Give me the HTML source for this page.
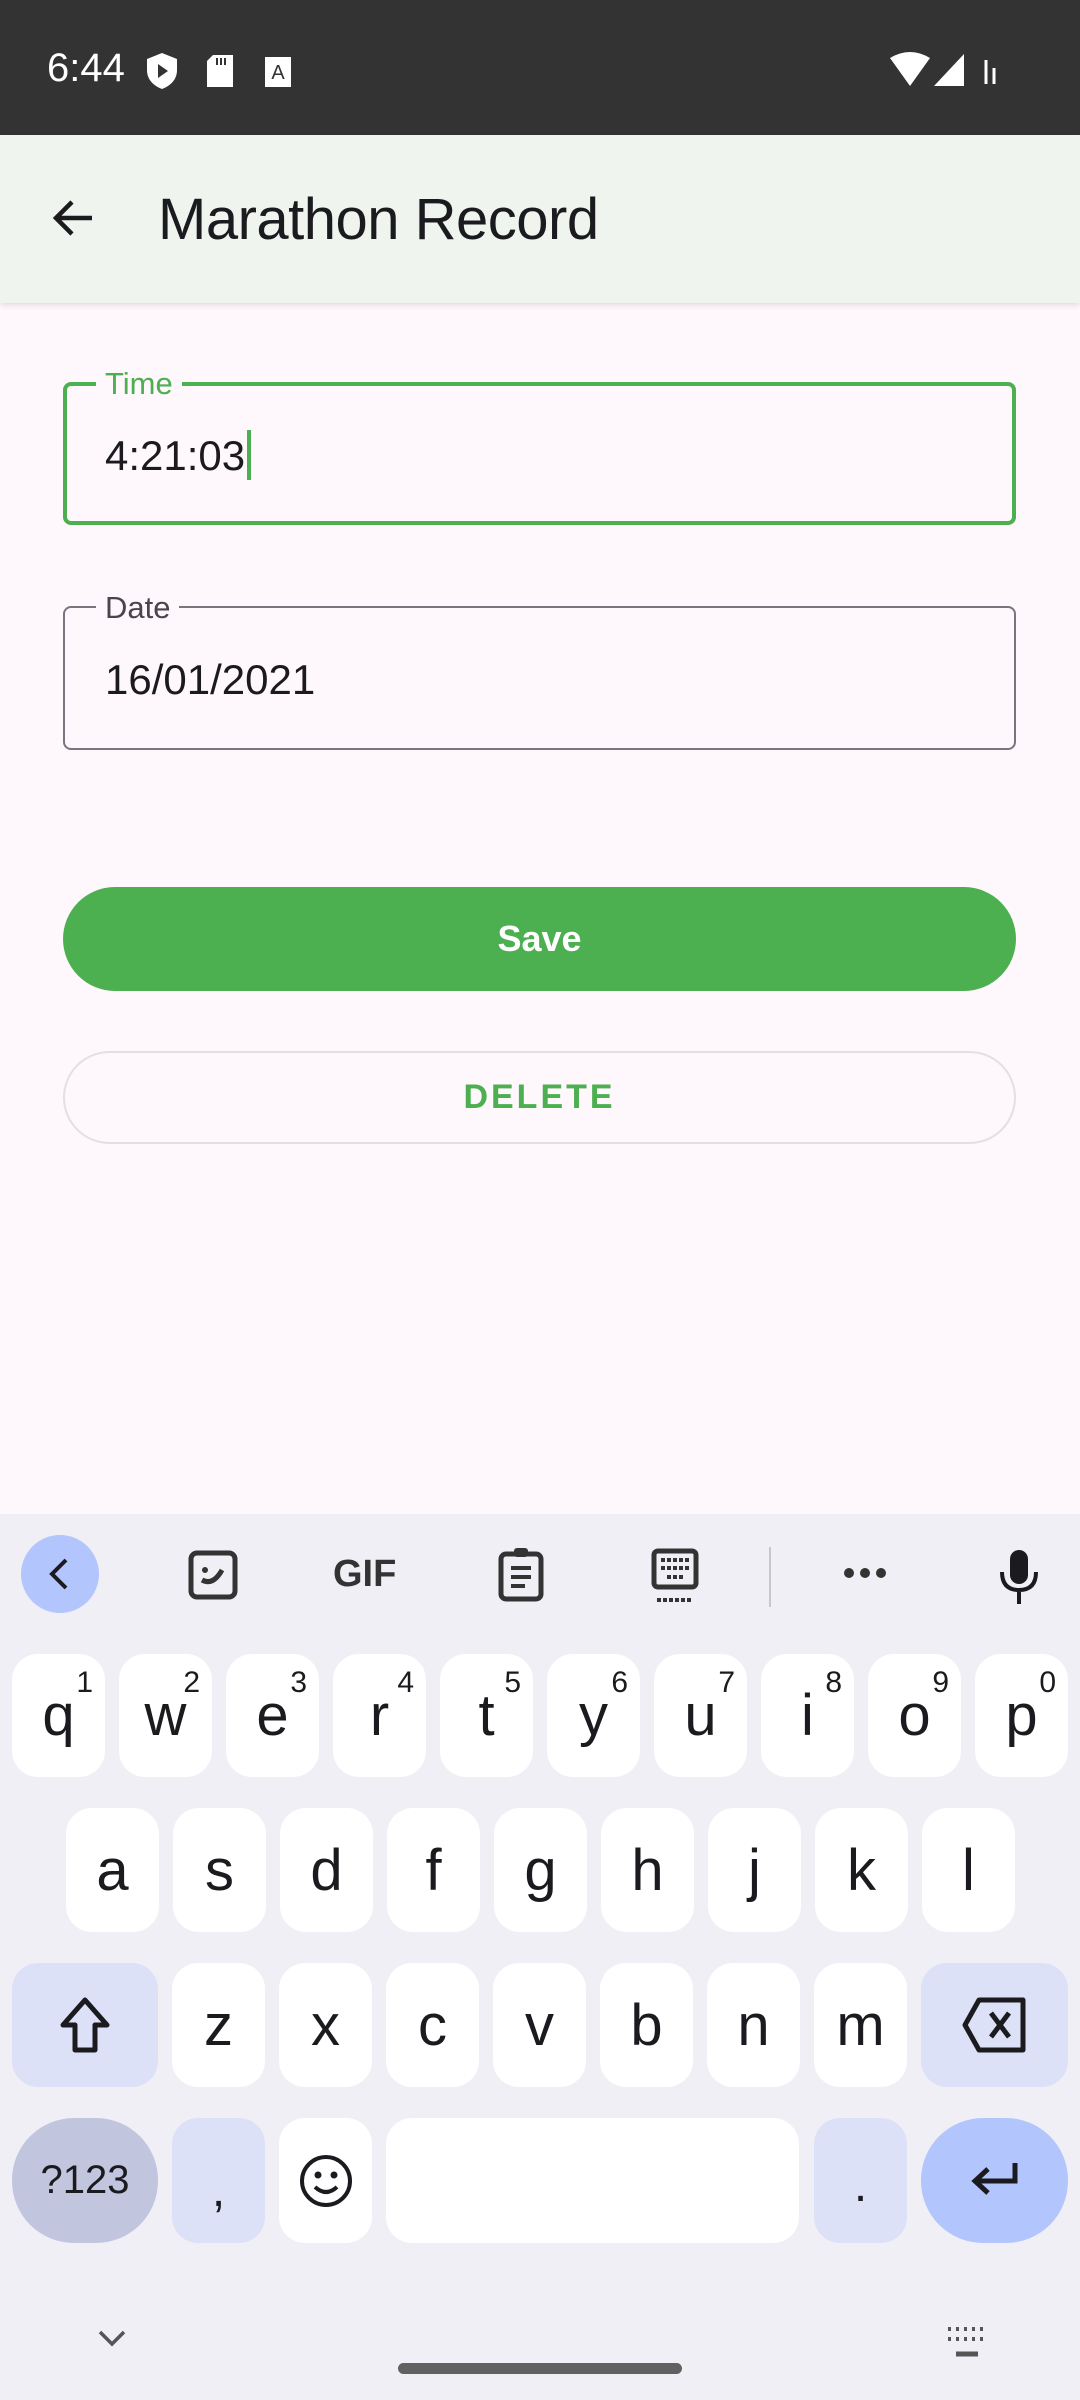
<!DOCTYPE html>
<html><head><meta charset="utf-8"><style>
*{margin:0;padding:0;box-sizing:border-box}
body{width:1080px;height:2400px;position:relative;overflow:hidden;background:#fef7fb;font-family:"Liberation Sans",sans-serif}
.a{position:absolute}
.k{position:absolute;background:#fff;border-radius:26px;display:flex;align-items:center;justify-content:center;font-size:58px;color:#1b1b1f}
.k sup{position:absolute;top:12px;right:12px;font-size:30px;color:#1b1b1f}
.s{background:#dde1f7}
</style></head><body>
<div class="a" style="left:0;top:0;width:1080px;height:135px;background:#333"></div>
<div class="a" style="left:47px;top:46px;color:#fff;font-size:40px">6:44</div>
<svg class="a" style="left:145px;top:52px" width="34" height="38" viewBox="0 0 34 38"><path d="M17 1 L32 7 V18 C32 28 25 34 17 37 C9 34 2 28 2 18 V7Z" fill="#fff"/><path d="M13 12 L23 19 L13 26Z" fill="#333"/></svg>
<svg class="a" style="left:207px;top:55px" width="26" height="32"><path d="M6 0H26V32H0V6Z" fill="#fff"/><path d="M10 3v7M14 3v7M18 3v7" stroke="#333" stroke-width="2"/></svg>
<svg class="a" style="left:265px;top:57px" width="26" height="30"><rect width="26" height="30" fill="#fff"/><text x="13" y="22" font-size="20" text-anchor="middle" fill="#333" font-family="Liberation Sans">A</text></svg>
<svg class="a" style="left:890px;top:52px" width="110" height="36"><path d="M0 6 Q20 -6 40 6 L20 34Z" fill="#fff"/><path d="M44 34 L74 2 V34Z" fill="#fff"/><path d="M96 8v24M104 16v16" stroke="#fff" stroke-width="3"/></svg>
<div class="a" style="left:0;top:135px;width:1080px;height:168px;background:#eff5ee;box-shadow:0 2px 6px rgba(0,0,0,.12)"></div>
<svg class="a" style="left:50px;top:194px" width="48" height="48" viewBox="0 0 48 48"><path d="M42 24H8M22 8L6 24L22 40" stroke="#1b1b1f" stroke-width="4.5" fill="none"/></svg>
<div class="a" style="left:158px;top:186px;font-size:58px;color:#1b1b1f;letter-spacing:-0.5px">Marathon Record</div>
<div class="a" style="left:63px;top:382px;width:953px;height:143px;border:4px solid #4caf50;border-radius:8px"></div>
<div class="a" style="left:96px;top:366px;padding:0 9px;background:#fef7fb;color:#4caf50;font-size:31px">Time</div>
<div class="a" style="left:105px;top:430px;font-size:42px;color:#1b1b1f">4:21:03<span style="display:inline-block;width:4px;height:50px;background:#4caf50;vertical-align:-10px;margin-left:2px"></span></div>
<div class="a" style="left:63px;top:606px;width:953px;height:144px;border:2px solid #79747e;border-radius:8px"></div>
<div class="a" style="left:96px;top:590px;padding:0 9px;background:#fef7fb;color:#49454f;font-size:31px">Date</div>
<div class="a" style="left:105px;top:656px;font-size:42px;color:#1b1b1f">16/01/2021</div>
<div class="a" style="left:63px;top:887px;width:953px;height:104px;background:#4caf50;border-radius:52px;color:#fff;font-size:36px;font-weight:bold;display:flex;align-items:center;justify-content:center">Save</div>
<div class="a" style="left:63px;top:1051px;width:953px;height:93px;border:2px solid #e3dfe4;border-radius:47px;color:#4caf50;font-size:34px;font-weight:bold;letter-spacing:3px;display:flex;align-items:center;justify-content:center">DELETE</div>
<div class="a" style="left:0;top:1514px;width:1080px;height:886px;background:#f0eff6"></div>
<div class="a" style="left:21px;top:1535px;width:78px;height:78px;border-radius:50%;background:#b3c5fd"></div>
<svg class="a" style="left:44px;top:1556px" width="30" height="36"><path d="M22 4L8 18L22 32" stroke="#1b1b1f" stroke-width="4" fill="none"/></svg>
<svg class="a" style="left:188px;top:1550px" width="50" height="50"><rect x="3" y="3" width="44" height="44" rx="6" stroke="#333" stroke-width="5" fill="none"/><circle cx="17" cy="20" r="3" fill="#333"/><path d="M14 30Q25 36 34 20" stroke="#333" stroke-width="5" fill="none"/></svg>
<div class="a" style="left:333px;top:1553px;font-size:38px;font-weight:bold;color:#333">GIF</div>
<svg class="a" style="left:498px;top:1546px" width="46" height="56"><rect x="3" y="8" width="40" height="45" rx="5" stroke="#333" stroke-width="5" fill="none"/><path d="M13 22h20M13 31h20M13 40h14" stroke="#333" stroke-width="4"/><rect x="16" y="2" width="14" height="9" rx="3" fill="#333"/></svg>
<svg class="a" style="left:651px;top:1548px" width="48" height="56"><rect x="3" y="3" width="42" height="36" rx="4" stroke="#333" stroke-width="5" fill="none"/><path d="M10 12h28M10 20h28M16 29h16M6 52h36" stroke="#333" stroke-width="4" stroke-dasharray="4 2"/></svg>
<div class="a" style="left:769px;top:1547px;width:2px;height:60px;background:#c8c8cc"></div>
<svg class="a" style="left:843px;top:1563px" width="44" height="20"><circle cx="6" cy="10" r="5" fill="#333"/><circle cx="22" cy="10" r="5" fill="#333"/><circle cx="38" cy="10" r="5" fill="#333"/></svg>
<svg class="a" style="left:998px;top:1548px" width="42" height="56"><rect x="12" y="2" width="18" height="34" rx="9" fill="#1b1b1f"/><path d="M4 24Q4 42 21 42Q38 42 38 24M21 42V56" stroke="#1b1b1f" stroke-width="4" fill="none"/></svg>
<div class="k" style="left:12px;top:1654px;width:93px;height:123px">q<sup>1</sup></div>
<div class="k" style="left:119px;top:1654px;width:93px;height:123px">w<sup>2</sup></div>
<div class="k" style="left:226px;top:1654px;width:93px;height:123px">e<sup>3</sup></div>
<div class="k" style="left:333px;top:1654px;width:93px;height:123px">r<sup>4</sup></div>
<div class="k" style="left:440px;top:1654px;width:93px;height:123px">t<sup>5</sup></div>
<div class="k" style="left:547px;top:1654px;width:93px;height:123px">y<sup>6</sup></div>
<div class="k" style="left:654px;top:1654px;width:93px;height:123px">u<sup>7</sup></div>
<div class="k" style="left:761px;top:1654px;width:93px;height:123px">i<sup>8</sup></div>
<div class="k" style="left:868px;top:1654px;width:93px;height:123px">o<sup>9</sup></div>
<div class="k" style="left:975px;top:1654px;width:93px;height:123px">p<sup>0</sup></div>
<div class="k" style="left:66px;top:1808px;width:93px;height:124px">a</div>
<div class="k" style="left:173px;top:1808px;width:93px;height:124px">s</div>
<div class="k" style="left:280px;top:1808px;width:93px;height:124px">d</div>
<div class="k" style="left:387px;top:1808px;width:93px;height:124px">f</div>
<div class="k" style="left:494px;top:1808px;width:93px;height:124px">g</div>
<div class="k" style="left:601px;top:1808px;width:93px;height:124px">h</div>
<div class="k" style="left:708px;top:1808px;width:93px;height:124px">j</div>
<div class="k" style="left:815px;top:1808px;width:93px;height:124px">k</div>
<div class="k" style="left:922px;top:1808px;width:93px;height:124px">l</div>
<div class="k s" style="left:12px;top:1963px;width:146px;height:124px"><svg width="60" height="60" viewBox="0 0 60 60"><path d="M30 5L8 30H20V55H40V30H52Z" stroke="#1b1b1f" stroke-width="5" fill="none" stroke-linejoin="round"/></svg></div>
<div class="k" style="left:172px;top:1963px;width:93px;height:124px">z</div>
<div class="k" style="left:279px;top:1963px;width:93px;height:124px">x</div>
<div class="k" style="left:386px;top:1963px;width:93px;height:124px">c</div>
<div class="k" style="left:493px;top:1963px;width:93px;height:124px">v</div>
<div class="k" style="left:600px;top:1963px;width:93px;height:124px">b</div>
<div class="k" style="left:707px;top:1963px;width:93px;height:124px">n</div>
<div class="k" style="left:814px;top:1963px;width:93px;height:124px">m</div>
<div class="k s" style="left:921px;top:1963px;width:147px;height:124px"><svg width="68" height="56" viewBox="0 0 68 56"><path d="M18 3H62V53H18L4 28Z" stroke="#1b1b1f" stroke-width="5" fill="none" stroke-linejoin="round"/><path d="M30 16L48 40M48 16L30 40" stroke="#1b1b1f" stroke-width="5"/></svg></div>
<div class="k" style="left:12px;top:2118px;width:146px;height:125px;border-radius:62px;background:#c1c6de;font-size:40px">?123</div>
<div class="k s" style="left:172px;top:2118px;width:93px;height:125px;font-size:48px;padding-top:20px">,</div>
<div class="k" style="left:279px;top:2118px;width:93px;height:125px"><svg width="54" height="54"><circle cx="27" cy="27" r="24" stroke="#1b1b1f" stroke-width="4" fill="none"/><circle cx="19" cy="21" r="3.5" fill="#1b1b1f"/><circle cx="35" cy="21" r="3.5" fill="#1b1b1f"/><path d="M16 33Q27 43 38 33" stroke="#1b1b1f" stroke-width="4" fill="none"/></svg></div>
<div class="k" style="left:386px;top:2118px;width:413px;height:125px"></div>
<div class="k s" style="left:814px;top:2118px;width:93px;height:125px;font-size:48px;padding-top:10px">.</div>
<div class="k" style="left:921px;top:2118px;width:147px;height:125px;border-radius:62px;background:#b3c5fd"><svg width="50" height="40"><path d="M45 2V20H6M18 8L5 20L18 32" stroke="#1b1b1f" stroke-width="5" fill="none"/></svg></div>
<svg class="a" style="left:98px;top:2330px" width="28" height="18"><path d="M2 2L14 14L26 2" stroke="#555" stroke-width="3.5" fill="none"/></svg>
<svg class="a" style="left:946px;top:2326px" width="42" height="32"><path d="M2 3h38M2 13h38" stroke="#555" stroke-width="4" stroke-dasharray="3 5"/><path d="M10 28h22" stroke="#555" stroke-width="5"/></svg>
<div class="a" style="left:398px;top:2363px;width:284px;height:11px;border-radius:6px;background:#616161"></div>
</body></html>
